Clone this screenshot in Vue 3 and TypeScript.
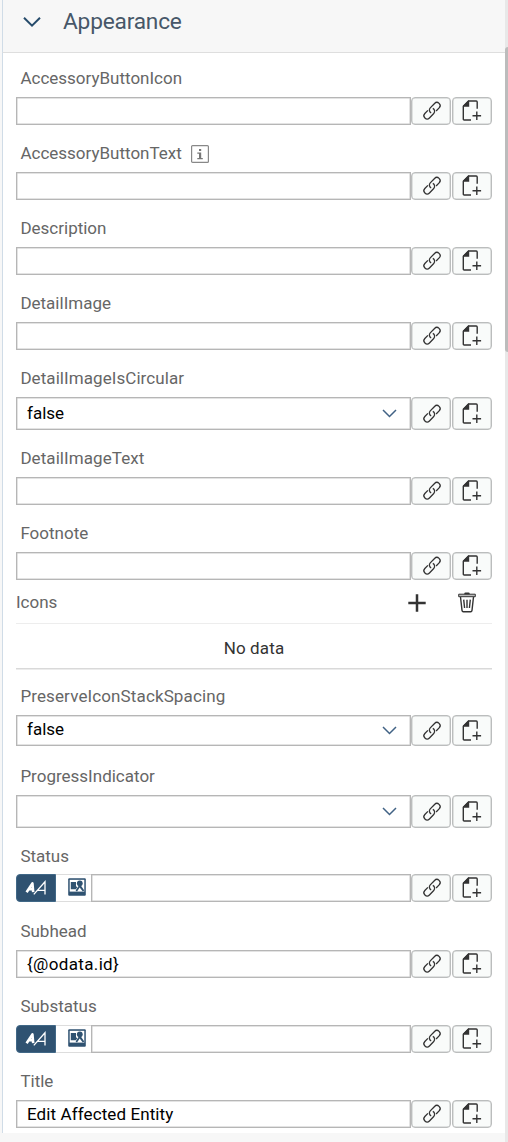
<script setup lang="ts">
interface Field {
  label: string
  kind: 'input' | 'select' | 'switch'
  value?: string
  info?: boolean
  cls?: string
}

const upper: Field[] = [
  { label: 'AccessoryButtonIcon', kind: 'input' },
  { label: 'AccessoryButtonText', kind: 'input', info: true },
  { label: 'Description', kind: 'input' },
  { label: 'DetailImage', kind: 'input' },
  { label: 'DetailImageIsCircular', kind: 'select', value: 'false', cls: 'wide' },
  { label: 'DetailImageText', kind: 'input', cls: 'wide' },
  { label: 'Footnote', kind: 'input', cls: 'last-upper' },
]

const lower: Field[] = [
  { label: 'PreserveIconStackSpacing', kind: 'select', value: 'false', cls: 'short' },
  { label: 'ProgressIndicator', kind: 'select', cls: 'progress' },
  { label: 'Status', kind: 'switch', cls: 'status' },
  { label: 'Subhead', kind: 'input', value: '{@odata.id}', cls: 'subhead' },
  { label: 'Substatus', kind: 'switch' },
  { label: 'Title', kind: 'input', value: 'Edit Affected Entity', cls: 'title' },
]

const groups = [upper, lower]
</script>

<template>
  <div class="panel">
    <header class="head">
      <svg class="head-arrow" width="20" height="12" viewBox="0 0 20 12"><path d="M2 1.8 10 9.7 18 1.8" /></svg>
      <h1>Appearance</h1>
    </header>
    <main class="body">
      <template v-for="(group, g) in groups" :key="g">
        <section v-if="g === 1" class="icons">
          <div class="toolbar">
            <span class="toolbar-title">Icons</span>
            <svg class="plus" width="18" height="18" viewBox="0 0 18 18"><path d="M9 .3V17.7M.3 9H17.7" /></svg>
            <svg class="trash" width="18" height="21" viewBox="0 0 18 21">
              <path class="lid" d="M.7 2.2H17.3V4.7H.7Z" />
              <path class="knob" d="M6.3 1.5Q6.3.5 7.5.5H10.5Q11.7.5 11.7 1.5V2.2H6.3Z" />
              <path d="M2.5 5 4 18.3Q4.2 19.7 5.3 19.7H12.7Q13.8 19.7 14 18.3L15.5 5M5.7 7.7 6.6 16M9 7.7V16M12.3 7.7 11.4 16" />
            </svg>
          </div>
          <div class="nodata">No data</div>
        </section>
        <div v-for="f in group" :key="f.label" class="field" :class="[f.kind, f.cls]">
          <div class="label">
            <span>{{ f.label }}</span>
            <svg v-if="f.info" class="info" width="18" height="18" viewBox="0 0 18 18">
              <rect x=".6" y=".6" width="16.8" height="16.8" rx="1" />
              <path d="M8 4H10.2V6H8ZM6.3 7.5H10.2V13H11.8V14.2H6.3V13H8V8.7H6.3Z" />
            </svg>
          </div>
          <div class="row">
            <div v-if="f.kind === 'switch'" class="modes">
              <span class="mode on">
                <svg width="22" height="16" viewBox="0 0 22 16">
                  <path class="bold" d="M1.6 12.2 7.4 3.4 8.2 12.2M4 9.2H8.2" />
                  <path class="thin" d="M8.8 14.4 20 1.7V14.4M12.4 10.4H19.8" />
                </svg>
              </span>
              <span class="mode">
                <svg width="18" height="18" viewBox="0 0 18 18">
                  <rect x=".2" y=".2" width="17.6" height="17.6" rx="1" fill="#2f5271" />
                  <path d="M1.7 1.8H16.3V13.6H1.7Z" fill="#fff" />
                  <path d="M2.8 4H8V8L9.2 9.5 7.8 11.2H2.8Z" fill="#2f5271" />
                  <circle cx="11.8" cy="5.3" r="2.9" fill="#2f5271" />
                  <path d="M11.8 6 16.3 12.4 14.8 13.4 11.7 9.6 9 13.6 7.6 12.6Z" fill="#2f5271" />
                </svg>
              </span>
            </div>
            <div class="box">
              <span>{{ f.value }}</span>
              <svg v-if="f.kind === 'select'" class="arrow" width="15" height="9" viewBox="0 0 15 9"><path d="M1 1 7.5 7.5 14 1" /></svg>
            </div>
            <button class="btn link" type="button" aria-label="Bind">
              <svg width="18" height="18" viewBox="0 0 18 18">
                <g transform="translate(9 8.7) rotate(-46)">
                  <path d="M2.6 3.2H7A3.2 3.2 0 0 0 7-3.2H.8A3.2 3.2 0 0 0-2.2 1" />
                  <path d="M-2.6-3.2H-7A3.2 3.2 0 0 0-7 3.2H-.8A3.2 3.2 0 0 0 2.2-1" />
                </g>
              </svg>
            </button>
            <button class="btn" type="button" aria-label="Add file">
              <svg width="20" height="22" viewBox="0 0 20 22">
                <path d="M9 20H2.2Q1.3 20 1.3 19V6.3L6.6 1H14.2Q15.2 1 15.2 2V8.8M14.8 11.4V20M10.5 15.7H19.1" />
                <path class="fold" d="M1 6.7V5.8L6.2.6H7.2V6.7Z" />
              </svg>
            </button>
          </div>
        </div>
      </template>
    </main>
    <aside class="scroll"><div class="thumb"></div></aside>
  </div>
</template>

<style>
html, body { overflow: hidden; background: #f7f7f7; }
</style>

<style scoped>
* { box-sizing: border-box; }
.panel {
  position: relative;
  width: 508px;
  height: 1142px;
  overflow: hidden;
  background: #f7f7f7;
  font-family: Roboto, "Liberation Sans", sans-serif;
  font-size: 17px;
  color: #000;
}
.head {
  display: flex;
  align-items: center;
  height: 53px;
  margin-left: 2px;
  padding: 0 0 8px 19px;
  border-left: 1px solid #d0dce7;
  border-bottom: 1px solid #dedede;
}
.head-arrow { fill: none; stroke: #264b6b; stroke-width: 2; }
h1 {
  margin: 0 0 0 21px;
  font-size: 22.7px;
  font-weight: 400;
  line-height: 30px;
  letter-spacing: -.2px;
  color: #475769;
}
.body {
  height: 1080px;
  margin-left: 2px;
  padding: 0 16px 0 13px;
  border-left: 1px solid #d0dce7;
  background: #fff;
}
.label {
  display: flex;
  align-items: center;
  height: 44px;
  padding: 6px 0 0 4.4px;
  line-height: 20px;
  color: #666;
  white-space: nowrap;
}
.wide .label { letter-spacing: .07px; }
.short .label { letter-spacing: .12px; }
.status .label { padding-top: 8px; }
.info { margin: 1px 0 0 9px; }
.info rect { fill: none; stroke: #888; stroke-width: 1.2; }
.info path { fill: #777; }
.row { display: flex; width: 476px; height: 28px; }
.field { margin-bottom: 3px; }
.select .row { height: 33px; }
.last-upper { margin-bottom: 0; }
.select.short { margin-bottom: 5px; }
.short .row { height: 31px; }
.progress { margin-bottom: 2px; }
.status { margin-bottom: 4px; }
.box {
  display: flex;
  flex: 1;
  align-items: center;
  justify-content: space-between;
  padding: 0 13px 0 10px;
  border: 1px solid #b6b6b6;
  box-shadow: inset 0 0 0 .5px #c8c8c8;
  background: #fff;
  line-height: 20px;
  white-space: nowrap;
}
.select .box { padding-bottom: 2px; }
.select .arrow { margin-top: 2px; }
.short .box { padding-bottom: 3px; }
.subhead .box { letter-spacing: .35px; }
.title .box { letter-spacing: .1px; }
.arrow { fill: none; stroke: #416285; stroke-width: 1.5; }
.btn {
  display: flex;
  align-items: center;
  justify-content: center;
  width: 40px;
  height: 100%;
  padding: 0;
  border: 1px solid #bbbdbd;
  box-shadow: inset 0 0 0 .5px #c5c7c7;
  border-radius: 4px;
  background: #f9fbfa;
}
.btn + .btn { margin-left: 1px; }
.btn svg { fill: none; stroke: #333; stroke-width: 1.4; overflow: visible; }
.btn.link svg { margin-left: 1px; stroke-width: 1.3; }
.btn .fold { fill: #333; stroke: none; }
.modes { display: flex; width: 75px; }
.mode {
  display: flex;
  align-items: center;
  justify-content: center;
  width: 35px;
  padding-left: 6px;
  border-top: 1px solid #ddd;
  border-bottom: 1px solid #ddd;
}
.mode svg { margin-top: -2px; }
.mode.on {
  width: 40px;
  padding-left: 0;
  border: 1px solid #416887;
  border-radius: 4px 0 0 4px;
  background: #2f5271;
}
.mode.on svg { margin: 0; }
.mode.on path { fill: none; stroke: #fff; }
.mode.on .bold { stroke-width: 2.6; stroke-linejoin: round; }
.mode.on .thin { stroke-width: 1.3; }
.toolbar {
  display: flex;
  align-items: center;
  height: 44px;
  border-bottom: 1px solid #ededed;
  color: #666;
}
.toolbar-title { margin-right: auto; }
.plus { fill: none; stroke: #333; stroke-width: 2.5; margin-top: 3px; }
.trash { margin: 1px 16px 0 32px; fill: none; stroke: #333; stroke-width: 1.4; }
.trash .lid { fill: #bbb; stroke-width: 1; }
.trash .knob { fill: #333; stroke: none; }
.icons { width: 476px; }
.nodata {
  height: 47px;
  padding-top: 14px;
  line-height: 20px;
  letter-spacing: .15px;
  color: #333;
  text-align: center;
  background: linear-gradient(#d9d9d9, #d9d9d9) 0 44px / 100% 1.5px no-repeat;
}
.scroll {
  position: absolute;
  top: 0;
  right: 0;
  width: 3px;
  height: 1142px;
  background: #e8e8e8;
}
.thumb {
  height: 305px;
  margin-top: 47px;
  border-radius: 3px 0 0 3px;
  background: #bcbcbc;
}
</style>
